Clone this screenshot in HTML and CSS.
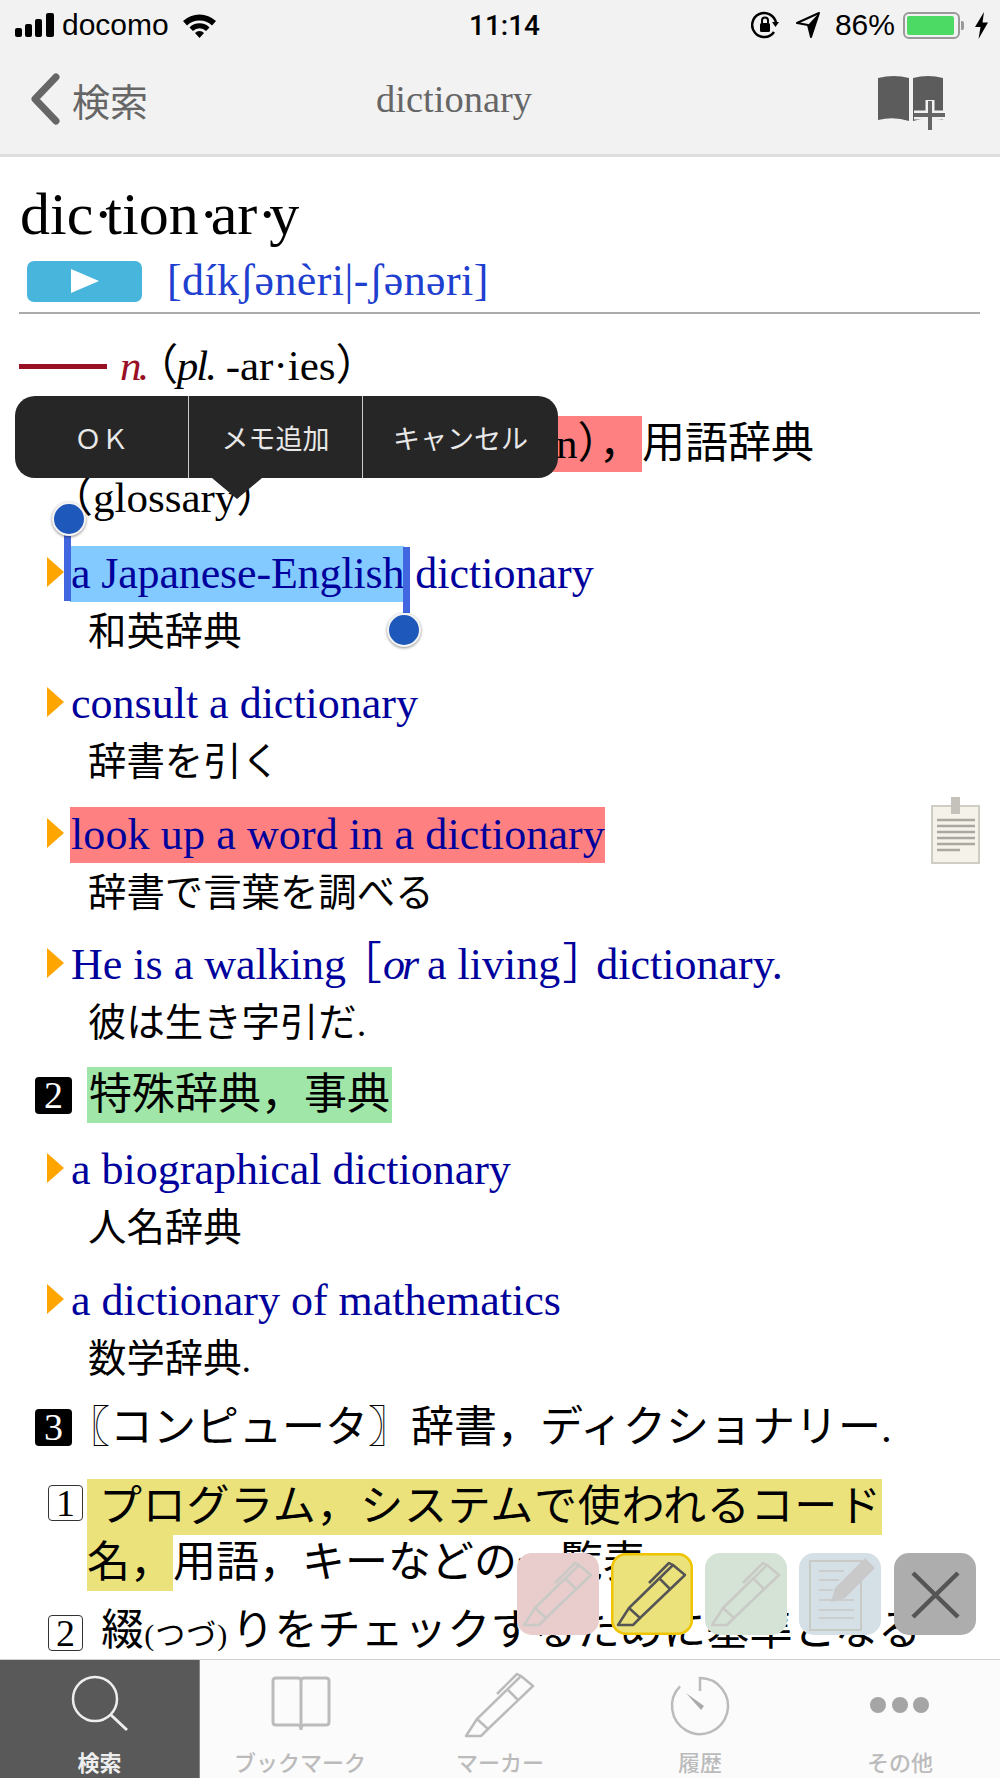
FILE: index.html
```html
<!DOCTYPE html>
<html lang="ja">
<head>
    <meta charset="UTF-8">
    <title>dictionary</title>
    <link rel="stylesheet" href="styles.css">
</head>
<body>
    <svg class="defs" width="0" height="0">
        <symbol id="marker" viewBox="0 0 82 82">
            <g fill="none" stroke="currentColor" stroke-width="2.5" stroke-linejoin="round">
                <path d="M62 12 L74 22 L29 65 L18 55 Z"/>
                <path d="M49 26 L59 36"/>
                <path d="M38 30 L58 10 L62 12"/>
                <path d="M18 55 L7 72 H22 L29 65"/>
            </g>
        </symbol>
    </svg>

    <div class="screen">
        <div class="status">
            <div class="status-left">
                <svg width="40" height="24" viewBox="0 0 40 24"><rect x="0" y="15" width="7" height="9" rx="2"/><rect x="10" y="11" width="7" height="13" rx="2"/><rect x="20" y="6" width="7" height="18" rx="2"/><rect x="31" y="0" width="8" height="24" rx="2"/></svg>
                <span class="carrier">docomo</span>
                <svg class="wifi" width="33" height="25" viewBox="0 0 33 25"><path d="M0 8 A24 24 0 0 1 33 8 L29 12.500 A18 18 0 0 0 4 12.500 Z"/><path d="M6.500 14.500 A14 14 0 0 1 26.500 14.500 L23 18 A9 9 0 0 0 10 18 Z"/><path d="M12 20 A6 6 0 0 1 21 20 L16.500 25 Z"/></svg>
            </div>
            <div class="time">11:14</div>
            <div class="status-right">
                <svg width="28" height="28" viewBox="0 0 28 28"><path d="M23 21 A12 12 0 1 1 25 12" fill="none" stroke="#000" stroke-width="2.500"/><path d="M21 11 H28 L24.500 16 Z"/><rect x="9" y="12" width="10" height="9" rx="1.500"/><path d="M11 12 V9.500 A3 3 0 0 1 17 9.500 V12" fill="none" stroke="#000" stroke-width="2"/></svg>
                <svg class="loc" width="24" height="26" viewBox="0 0 24 26"><path d="M23 1 L15 25 L12 13 L1 11 Z" fill="none" stroke="#000" stroke-width="2" stroke-linejoin="round"/><path d="M23 1 L15 25 L12 13 Z"/></svg>
                <span class="percent">86%</span>
                <div class="battery"><div class="battery-fill"></div></div>
                <div class="battery-nub"></div>
                <svg class="bolt" width="13" height="27" viewBox="0 0 13 27"><path d="M9 0 L0 15 H5.500 L3.500 27 L13 10.500 H7.500 Z"/></svg>
            </div>
        </div>

        <div class="nav">
            <div class="nav-back">
                <svg width="30" height="52" viewBox="0 0 30 52"><path d="M26 4 L5 26 L26 48" fill="none" stroke="#666" stroke-width="7" stroke-linecap="round" stroke-linejoin="round"/></svg>
                <span>検索</span>
            </div>
            <div class="nav-title">dictionary</div>
            <svg class="nav-add" width="68" height="56" viewBox="0 0 68 56">
                <path d="M0 3 Q16 -1 31 3 V46 Q16 41 0 45 Z" fill="#5c5c5c"/>
                <path d="M35 3 Q50 -1 65 3 V45 Q50 41 35 46 Z" fill="#5c5c5c"/>
                <path d="M52 25 V55 M36 40 H67" stroke="#f2f2f2" stroke-width="9"/>
                <path d="M52 26 V55 M36 40 H67" stroke="#666" stroke-width="4"/>
            </svg>
        </div>

        <div class="content">
            <h1 class="headword">dic<span class="dot">·</span>tion<span class="dot">·</span>ar<span class="dot">·</span>y</h1>
            <div class="pron-row">
                <div class="play"><div class="play-tri"></div></div>
                <div class="pron">[díkʃənèri|-ʃənəri]</div>
            </div>
            <div class="rule"></div>

            <div class="sense pos-row">
                <div class="pos-dash"></div>
                <span class="pos">n.</span><span class="paren-open">（</span><i class="pl">pl.</i><span>&nbsp;-ar·ies）</span>
            </div>
            <div class="sense sense-first"><span class="hl-red hl-first">n），</span><span>用語辞典</span></div>
            <div class="sense gloss">（glossary）</div>

            <div class="example first-example">
                <div class="en">
                    <div class="arrow"></div>
                    <div><span class="selected">a Japanese-English<span class="sel-bar bar-start"></span><span class="knob knob-start"></span><span class="sel-bar bar-end"></span><span class="knob knob-end"></span></span> dictionary</div>
                </div>
                <div class="ja">和英辞典</div>
            </div>
            <div class="example">
                <div class="en"><div class="arrow"></div><div class="en-text">consult a dictionary</div></div>
                <div class="ja">辞書を引く</div>
            </div>
            <div class="example">
                <div class="en">
                    <div class="arrow"></div>
                    <div class="hl-red en-text look-up">look up a word in a dictionary</div>
                    <svg class="memo" width="50" height="68" viewBox="0 0 50 68">
                        <rect x="1" y="9" width="47" height="57" fill="#f5f2e9" stroke="#cfcdc4" stroke-width="2"/>
                        <rect x="20" y="0" width="9" height="17" fill="#c4c2ba"/>
                        <path d="M6 23 H44 M6 29 H44 M6 35 H44 M6 41 H44 M6 47 H44 M6 53 H29" stroke="#aaa8a2" stroke-width="2.500"/>
                    </svg>
                </div>
                <div class="ja">辞書で言葉を調べる</div>
            </div>
            <div class="example">
                <div class="en"><div class="arrow"></div><div class="en-text">He is a walking<span class="bracket-open">［</span><i class="or">or</i> a living<span class="bracket-close">］</span>dictionary.</div></div>
                <div class="ja">彼は生き字引だ.</div>
            </div>

            <div class="sense sense-row sense-two">
                <span class="badge">2</span>
                <span class="hl-green">特殊辞典，事典</span>
            </div>
            <div class="example after-sense">
                <div class="en"><div class="arrow"></div><div class="en-text">a biographical dictionary</div></div>
                <div class="ja">人名辞典</div>
            </div>
            <div class="example">
                <div class="en"><div class="arrow"></div><div class="en-text">a dictionary of mathematics</div></div>
                <div class="ja">数学辞典.</div>
            </div>

            <div class="sense sense-row sense-three">
                <span class="badge">3</span>
                <span>〖コンピュータ〗辞書，ディクショナリー.</span>
            </div>
            <div class="sense sub-row sub-one">
                <span class="num-box">1</span>
                <span class="hl-yellow hl-wide">プログラム，システムで使われるコード</span>
            </div>
            <div class="sense sub-cont">
                <span class="hl-yellow">名，</span><span>用語，キーなどの一覧表</span>
            </div>
            <div class="sense sub-row sub-two">
                <span class="num-box">2</span>
                <span class="sub-text">綴<small>(つづ)</small>りをチェックするために基準となる</span>
            </div>
        </div>

        <div class="tabbar">
            <div class="tab active">
                <svg width="82" height="82" viewBox="0 0 82 82"><circle cx="36" cy="35" r="22" fill="none" stroke="currentColor" stroke-width="2.500"/><path d="M52 51 L68 66" stroke="currentColor" stroke-width="3"/></svg>
                <span>検索</span>
            </div>
            <div class="tab">
                <svg width="82" height="82" viewBox="0 0 82 82"><path d="M42 17 Q42 14 39 14 H17 Q14 14 14 17 V58 Q14 61 17 61 H39 Q42 61 42 66 Q42 61 45 61 H67 Q70 61 70 58 V17 Q70 14 67 14 H45 Q42 14 42 17 V66" fill="none" stroke="currentColor" stroke-width="3"/></svg>
                <span>ブックマーク</span>
            </div>
            <div class="tab">
                <svg width="82" height="82"><use href="#marker"/></svg>
                <span>マーカー</span>
            </div>
            <div class="tab">
                <svg width="82" height="82" viewBox="0 0 82 82"><path d="M41 27 V14 A28 28 0 1 1 21 22.400" fill="none" stroke="currentColor" stroke-width="2.500"/><path d="M27 29 L45 42 L42 46 Z" fill="#aaa"/></svg>
                <span>履歴</span>
            </div>
            <div class="tab">
                <svg width="82" height="82" viewBox="0 0 82 82"><circle cx="19" cy="41" r="8" fill="#a5a5a5"/><circle cx="41" cy="41" r="8" fill="#a5a5a5"/><circle cx="62" cy="41" r="8" fill="#a5a5a5"/></svg>
                <span>その他</span>
            </div>
        </div>

        <div class="popup">
            <div class="popup-btn btn-ok">ＯＫ</div>
            <div class="popup-btn btn-memo">メモ追加</div>
            <div class="popup-btn btn-cancel">キャンセル</div>
        </div>

        <div class="palette">
            <div class="pal-btn pal-red"><svg width="82" height="82"><use href="#marker"/></svg></div>
            <div class="pal-btn pal-yellow"><svg width="82" height="82"><use href="#marker"/></svg></div>
            <div class="pal-btn pal-green"><svg width="82" height="82"><use href="#marker"/></svg></div>
            <div class="pal-btn pal-blue">
                <svg width="82" height="82" viewBox="0 0 82 82">
                    <rect x="11" y="8" width="51" height="69" fill="none" stroke="#c9c9c6" stroke-width="2"/>
                    <path d="M20 18 H45 M20 27 H40 M20 37 H34 M20 47 H55 M20 57 H55 M20 65 H55" stroke="#c9c9c6" stroke-width="1.500"/>
                    <path d="M32 49 L36 35 L66 5 L76 15 L46 45 Z" fill="#c9c9c9"/>
                </svg>
            </div>
            <div class="pal-btn pal-close">
                <svg width="82" height="82" viewBox="0 0 82 82"><path d="M19 20 L64 64 M64 20 L19 64" stroke="#555" stroke-width="4.500"/></svg>
            </div>
        </div>
    </div>
</body>
</html>
```

FILE: styles.css
```css
body{
    margin: 0;
    background: #fff;
    font-family: "Liberation Serif", "Noto Sans CJK JP", serif;
    color: #000;
}
.defs{
    position: absolute;
}
.screen{
    position: relative;
    width: 1000px;
    height: 1778px;
    display: flex;
    flex-direction: column;
    overflow: hidden;
}

/* status bar */
.status{
    height: 50px;
    flex: none;
    background: #f2f2f2;
    display: flex;
    align-items: center;
    justify-content: space-between;
    padding: 0 12px 0 15px;
    font-family: "Liberation Sans", sans-serif;
    font-size: 30px;
}
.status-left, .status-right{
    width: 340px;
    display: flex;
    align-items: center;
}
.status-right{
    justify-content: flex-end;
}
.carrier{
    margin-left: 7px;
}
.wifi{
    margin-left: 14px;
}
.time{
    margin-left: 6px;
    font-family: Roboto, sans-serif;
    font-weight: 500;
    font-size: 28px;
}
.loc{
    margin-left: 17px;
}
.percent{
    margin-left: 15px;
}
.battery{
    margin-left: 8px;
    width: 57px;
    height: 27px;
    box-sizing: border-box;
    border: 2px solid #9a9a9a;
    border-radius: 6px;
    padding: 2px;
}
.battery-fill{
    height: 100%;
    width: 96%;
    background: #4cd964;
    border-radius: 2px;
}
.battery-nub{
    width: 3px;
    height: 9px;
    margin-left: 1px;
    background: #9a9a9a;
    border-radius: 0 2px 2px 0;
}
.bolt{
    margin-left: 11px;
}

/* navigation */
.nav{
    height: 104px;
    flex: none;
    box-sizing: content-box;
    background: #f2f2f2;
    border-bottom: 3px solid #dedede;
    display: flex;
    align-items: center;
    padding-left: 30px;
    color: #666;
}
.nav-back{
    width: 346px;
    display: flex;
    align-items: center;
    gap: 12px;
    font-family: "Noto Sans CJK JP", sans-serif;
    font-size: 38px;
    margin-top: -6px;
}
.nav-title{
    font-size: 38.5px;
    margin-top: -6px;
}
.nav-add{
    margin-left: auto;
    margin-right: 54px;
    margin-top: 2px;
}

/* entry */
.content{
    flex: 1;
    min-height: 0;
    overflow: hidden;
    font-size: 44px;
    line-height: 56px;
}
.headword{
    margin: 27px 0 0 20px;
    height: 60px;
    font-size: 60px;
    line-height: 60px;
    font-weight: 400;
}
.dot{
    letter-spacing: -8px;
}
.pron-row{
    margin: 14px 0 0 27px;
    height: 46px;
    display: flex;
    align-items: center;
}
.play{
    width: 115px;
    height: 41px;
    background: #47b5dc;
    border-radius: 7px;
    display: flex;
    align-items: center;
    justify-content: center;
}
.play-tri{
    width: 0;
    height: 0;
    border-left: 28px solid #fff;
    border-top: 12px solid transparent;
    border-bottom: 12px solid transparent;
}
.pron{
    margin-left: 25px;
    color: #1f3fd0;
    font-size: 44px;
    letter-spacing: 0.4px;
}
.rule{
    margin: 8px 20px 0 19px;
    height: 2px;
    background: #aaa;
}
.sense{
    font-size: 43px;
    height: 56px;
}
.pos-row{
    margin-top: 24px;
    padding-left: 19px;
    display: flex;
    align-items: center;
}
.pos-dash{
    width: 88px;
    height: 5px;
    background: #990f24;
    margin-right: 13px;
}
.pos{
    color: #990f24;
    font-style: italic;
    letter-spacing: -3px;
}
.paren-open{
    margin-left: 9px;
    font-feature-settings: "palt";
}
.pl{
    letter-spacing: -2px;
}
.sense-first{
    margin-top: 22px;
    padding-left: 537px;
}
.hl-red{
    display: inline-block;
    background: #ff8080;
}
.hl-first{
    padding-left: 19px;
}
.gloss{
    margin-top: -2px;
    padding-left: 50px;
}
.example{
    margin-top: 16.4px;
}
.first-example{
    margin-top: 20px;
}
.en{
    position: relative;
    display: flex;
    align-items: center;
    gap: 6px;
    height: 56px;
    padding-left: 47px;
    color: #00009c;
}
.en-text{
    padding-left: 1px;
}
.look-up{
    letter-spacing: 0.12px;
}
.bracket-open{
    font-feature-settings: "palt";
    margin: 0 2px 0 13px;
}
.bracket-close{
    font-feature-settings: "palt";
    margin: 0 11px 0 3px;
}
.or{
    letter-spacing: -3px;
}
.arrow{
    width: 0;
    height: 0;
    margin-top: -4px;
    border-left: 17px solid #ffa500;
    border-top: 15px solid transparent;
    border-bottom: 15px solid transparent;
}
.ja{
    margin-top: 2px;
    padding-left: 88px;
    font-size: 38.4px;
    height: 56px;
}
.selected{
    position: relative;
    display: inline-block;
    padding-left: 1px;
    background: #82caff;
    letter-spacing: -0.15px;
}
.sel-bar{
    position: absolute;
    width: 7px;
    background: #4166e0;
}
.bar-start{
    left: -6px;
    top: -13px;
    height: 68px;
}
.bar-end{
    right: -6px;
    top: 1px;
    height: 66px;
}
.knob{
    position: absolute;
    width: 30px;
    height: 30px;
    box-sizing: content-box;
    background: #1f58bb;
    border: 2px solid #f4f4f4;
    border-radius: 50%;
    box-shadow: 0 1px 3px rgba(0, 0, 0, 0.45);
}
.knob-start{
    left: -18px;
    top: -44px;
}
.knob-end{
    right: -17px;
    top: 67px;
}
.memo{
    position: absolute;
    left: 931px;
    top: -10px;
}
.sense-row, .sub-row{
    display: flex;
    align-items: center;
}
.sense-two{
    margin-top: 16px;
    padding-left: 35px;
}
.after-sense{
    margin-top: 19px;
}
.sense-three{
    margin-top: 13px;
    padding-left: 35px;
}
.badge{
    width: 37px;
    height: 37px;
    background: #000;
    color: #fff;
    border-radius: 4px;
    font-size: 38px;
    line-height: 37px;
    text-align: center;
    margin-right: 15px;
}
.sense-three .badge{
    margin-right: -5px;
}
.hl-green{
    display: inline-block;
    background: #a0e6a8;
    padding: 0 2px;
}
.hl-yellow{
    display: inline-block;
    background: #ebe27c;
}
.hl-wide{
    padding-left: 12px;
    letter-spacing: 0.75px;
}
.num-box{
    box-sizing: border-box;
    width: 35px;
    height: 36px;
    border: 1.5px solid #333;
    border-radius: 4px;
    font-size: 38px;
    line-height: 34px;
    text-align: center;
    margin-right: 4px;
}
.sub-one .num-box{
    margin-top: -8px;
}
.sub-one{
    margin-top: 23px;
    padding-left: 48px;
}
.sub-cont{
    padding-left: 87px;
}
.sub-two{
    margin-top: 14px;
    padding-left: 48px;
}
.sub-text{
    margin-left: 14px;
    letter-spacing: 0.2px;
}
.sub-text small{
    font-size: 30px;
    letter-spacing: 1px;
    margin-right: 3px;
}

/* tab bar */
.tabbar{
    height: 119px;
    flex: none;
    box-sizing: border-box;
    border-top: 1px solid #cfcfcf;
    background: #fbfbfb;
    display: flex;
}
.tab{
    width: 200px;
    box-sizing: border-box;
    padding-top: 4px;
    display: flex;
    flex-direction: column;
    align-items: center;
    color: #bbb;
    font-family: "Noto Sans CJK JP", sans-serif;
    font-size: 22px;
    font-weight: 500;
    line-height: 30px;
}
.tab.active{
    background: #595959;
    color: #eee;
    border-right: 1px solid #888;
    font-weight: 700;
}

/* selection menu */
.popup{
    position: absolute;
    left: 15px;
    top: 396px;
    width: 543px;
    height: 82px;
    display: flex;
    background: #262626;
    border-radius: 20px;
    color: #e8e8e8;
    font-family: "Noto Sans CJK JP", sans-serif;
    font-size: 27px;
}
.popup::after{
    content: "";
    position: absolute;
    left: 197px;
    top: 82px;
    border-top: 21px solid #262626;
    border-left: 25px solid transparent;
    border-right: 25px solid transparent;
}
.popup-btn{
    display: flex;
    align-items: center;
    justify-content: center;
    box-sizing: border-box;
}
.btn-ok{
    width: 174px;
    border-right: 1px solid #ccc;
}
.btn-memo{
    width: 174px;
    border-right: 1px solid #ccc;
}
.btn-cancel{
    flex: 1;
}

/* marker palette */
.palette{
    position: absolute;
    left: 517px;
    top: 1553px;
    display: flex;
    gap: 12px;
}
.pal-btn{
    position: relative;
    width: 82px;
    height: 82px;
    border-radius: 15px;
    color: #c9c9c6;
}
.pal-red{
    background: #e9cdcd;
}
.pal-yellow{
    background: #ebe27c;
    color: #555;
    box-shadow: inset 0 0 0 2.5px #f0c400;
}
.pal-green{
    background: #d5e3d6;
}
.pal-blue{
    background: #d5dfe6;
}
.pal-close{
    margin-left: 1px;
    background: #adadad;
}
```
